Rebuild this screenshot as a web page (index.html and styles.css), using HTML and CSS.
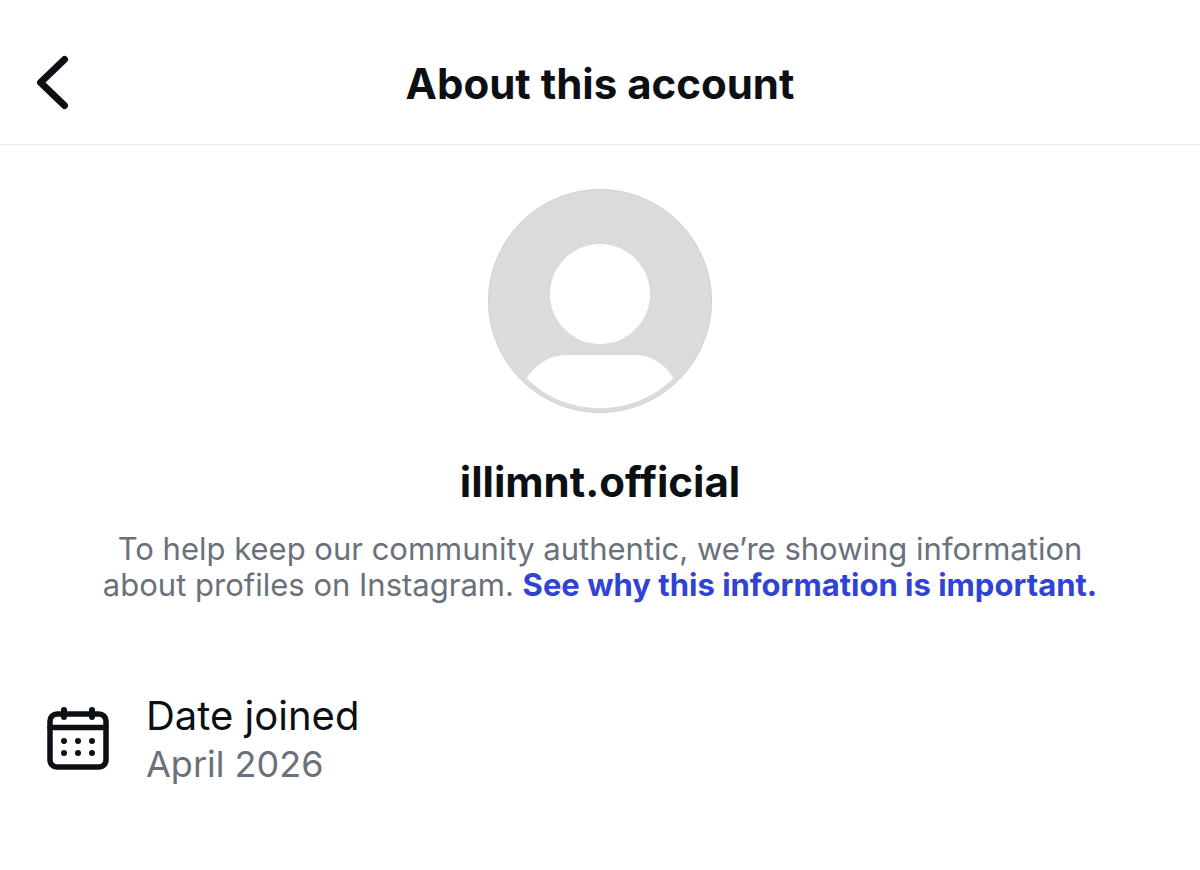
FILE: index.html
```
<!DOCTYPE html>
<html lang="en">
<head>
  <meta charset="UTF-8" />
  <meta name="viewport" content="width=device-width, initial-scale=1.0" />
  <title>About this account</title>
  <link rel="stylesheet" href="styles.css">
</head>
<body>

  <header class="top-bar">
    <button class="back-btn" type="button" aria-label="Back">
      <svg width="40" height="60" viewBox="0 0 40 60" fill="none" stroke="currentColor" stroke-width="7" stroke-linecap="round" stroke-linejoin="round">
        <path d="M32.500 7.500 L8.500 30.500 L32.500 53.500" />
      </svg>
    </button>
    <h1>About this account</h1>
  </header>

  <main>
    <section class="profile">
      <!-- Default avatar -->
      <svg class="avatar" viewBox="0 0 224 224" role="img" aria-label="Profile picture">
        <circle cx="112" cy="112" r="111.500" fill="#dbdbdb" stroke="#d0d0d0" />
        <circle cx="112" cy="105" r="50" fill="#fff" />
        <path d="M38.500 189 C49 174 62 166 80 166 H145 C163 166 176 174 185.500 189 C165 209 140 219 112 219 C84 219 58 209 38.500 189 Z" fill="#fff" />
      </svg>
      <h2>illimnt.official</h2>
      <p class="info">To help keep our community authentic, we’re showing information about profiles on Instagram. <a href="#">See why this information is important.</a></p>
    </section>

    <section class="detail">
      <svg class="calendar" viewBox="0 0 64 64" fill="none" stroke="currentColor" stroke-linecap="round" aria-hidden="true">
        <rect x="4" y="8" width="56" height="53" rx="7" stroke-width="5.500" />
        <path d="M4 21.500 H60" stroke-width="5.500" />
        <path d="M18 4 V11 M46 4 V11" stroke-width="6" />
        <g fill="currentColor" stroke="none">
          <circle cx="18" cy="35" r="3" />
          <circle cx="32" cy="35" r="3" />
          <circle cx="46" cy="35" r="3" />
          <circle cx="18" cy="47" r="3" />
          <circle cx="32" cy="47" r="3" />
          <circle cx="46" cy="47" r="3" />
        </g>
      </svg>
      <div>
        <h3>Date joined</h3>
        <p>April 2026</p>
      </div>
    </section>
  </main>

</body>
</html>
```
FILE: styles.css
```
* {
  box-sizing: border-box;
}
body {
  margin: 0;
  background: #fff;
  color: #0c1014;
  font-family: Inter, 'Liberation Sans', sans-serif;
  font-variant-ligatures: none;
}
h1, h2, h3, p {
  margin: 0;
}

/* Header */
.top-bar {
  display: grid;
  grid-template-columns: 40px 1fr 40px;
  align-items: center;
  padding: 52px 32px 32px;
  border-bottom: 1px solid #e9eaec;
}
.back-btn {
  display: flex;
  padding: 0;
  border: none;
  background: none;
  color: inherit;
  cursor: pointer;
}
h1, h2 {
  font-size: 42px;
  line-height: 52px;
  font-weight: 700;
  text-align: center;
}
h1 {
  padding-top: 4px;
}

/* Profile */
.profile {
  display: flex;
  flex-direction: column;
  align-items: center;
  padding: 44px 32px 0;
}
.avatar {
  width: 224px;
  height: 224px;
  margin-bottom: 43px;
}
.info {
  max-width: 1040px;
  margin-top: 23px;
  color: #6a717a;
  font-size: 31px;
  line-height: 36px;
  text-align: center;
}
.info a {
  color: #3143d3;
  font-weight: 700;
  text-decoration: none;
}

/* Date joined */
.detail {
  display: flex;
  align-items: center;
  gap: 36px;
  padding: 87px 46px 40px;
}
.calendar {
  width: 64px;
  height: 64px;
}
.detail h3 {
  font-size: 40px;
  line-height: 52px;
  font-weight: 400;
}
.detail p {
  color: #6a717a;
  font-size: 36px;
  line-height: 44px;
}
```
